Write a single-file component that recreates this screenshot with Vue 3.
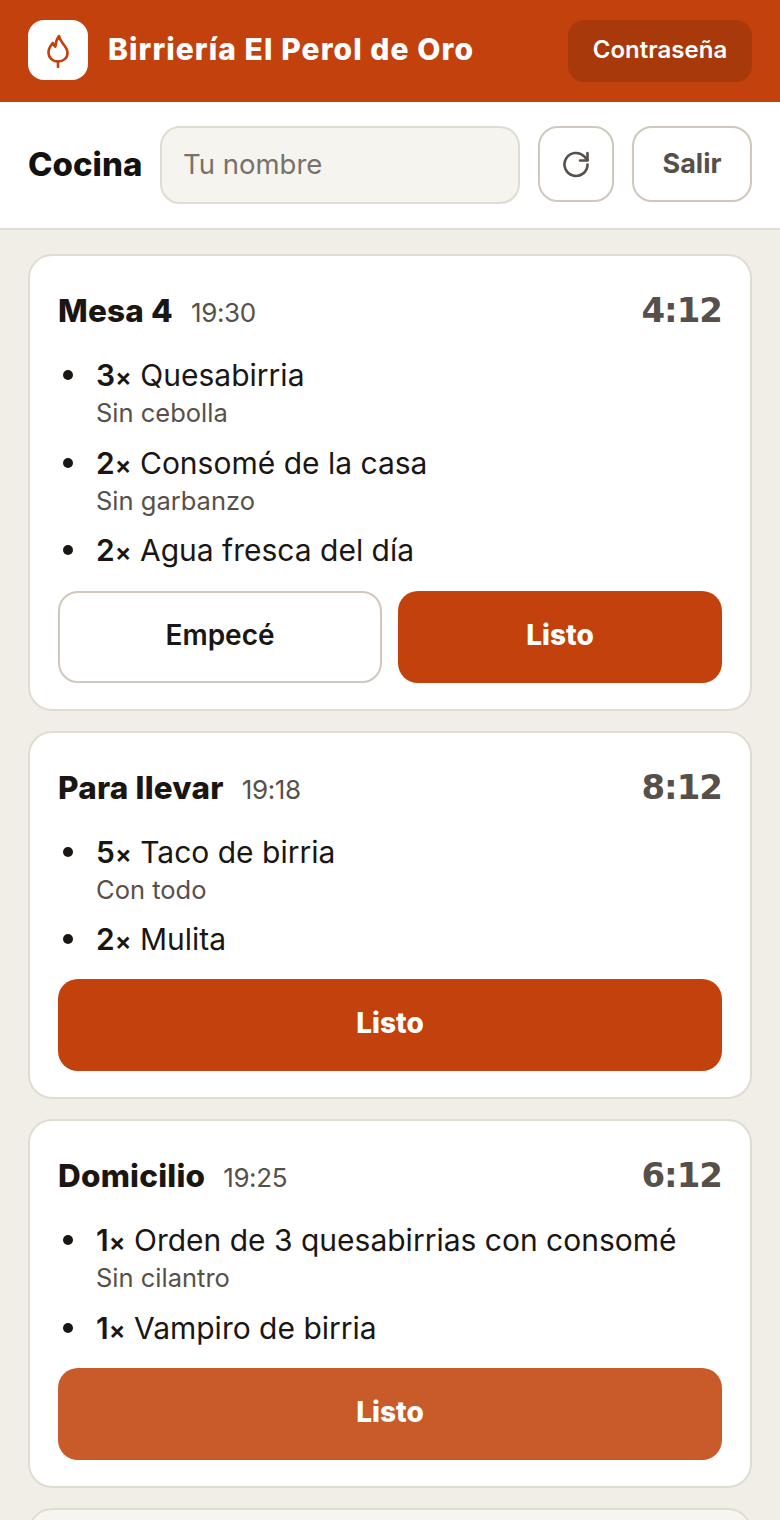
<script setup>
import { ref } from 'vue'

const nombre = ref('')

const orders = ref([
  {
    id: 1,
    mesa: 'Mesa 4',
    hora: '19:30',
    tiempo: '4:12',
    started: false,
    items: [
      { qty: 3, name: 'Quesabirria', note: 'Sin cebolla' },
      { qty: 2, name: 'Consomé de la casa', note: 'Sin garbanzo' },
      { qty: 2, name: 'Agua fresca del día' }
    ]
  },
  {
    id: 2,
    mesa: 'Para llevar',
    hora: '19:18',
    tiempo: '8:12',
    started: true,
    items: [
      { qty: 5, name: 'Taco de birria', note: 'Con todo' },
      { qty: 2, name: 'Mulita' }
    ]
  },
  {
    id: 3,
    mesa: 'Domicilio',
    hora: '19:25',
    tiempo: '6:12',
    started: true,
    busy: true,
    items: [
      { qty: 1, name: 'Orden de 3 quesabirrias con consomé', note: 'Sin cilantro' },
      { qty: 1, name: 'Vampiro de birria' }
    ]
  }
])
</script>

<template>
  <div class="page">
    <header class="topbar">
      <div class="logo">
        <svg width="34" height="36" viewBox="0 0 34 36" fill="none" stroke="#c2410c" stroke-width="2.6" stroke-linecap="round" stroke-linejoin="round">
          <path d="M17 29.500c-5.600 0-9.500-4-9.500-9.300 0-3.800 2-6.500 4.200-9.200 .6 1.800 1.300 3 2.600 3.700 .2-4 1.300-7.500 3.700-10.700 .8 4 2.800 6.200 4.800 8.700 2 2.400 3.700 4.900 3.700 8.200 0 5.200-4 8.600-9.500 8.600z" />
          <path d="M17 29.500v5.500" />
        </svg>
      </div>
      <h1 class="brand">Birriería El Perol de Oro</h1>
      <button class="pass-btn">Contraseña</button>
    </header>

    <div class="toolbar">
      <span class="section">Cocina</span>
      <input v-model="nombre" class="name-input" placeholder="Tu nombre" />
      <button class="ghost icon-btn" aria-label="Actualizar">
        <svg width="30" height="30" viewBox="0 0 30 30" fill="none" stroke="#57504a" stroke-width="2.6" stroke-linecap="round" stroke-linejoin="round">
          <path d="M26.500 15.500a11.500 11.500 0 1 1-3.300-8.100l3.300 3.600" />
          <path d="M26.500 4v7.500H19" />
        </svg>
      </button>
      <button class="ghost salir">Salir</button>
    </div>

    <main class="list">
      <article v-for="o in orders" :key="o.id" class="card">
        <div class="card-head">
          <div class="card-title">
            <span class="mesa">{{ o.mesa }}</span>
            <span class="hora">{{ o.hora }}</span>
          </div>
          <span class="tiempo">{{ o.tiempo }}</span>
        </div>
        <ul class="items">
          <li v-for="(it, i) in o.items" :key="i">
            <span><b>{{ it.qty }}</b><span class="times">×</span> {{ it.name }}</span>
            <div v-if="it.note" class="note">{{ it.note }}</div>
          </li>
        </ul>
        <div class="actions">
          <button v-if="!o.started" class="btn outline">Empecé</button>
          <button class="btn primary" :class="{ busy: o.busy }">Listo</button>
        </div>
      </article>
      <div class="card faded"></div>
    </main>
  </div>
</template>

<style>
html, body {
  margin: 0;
  background: #f1eee7;
}
</style>

<style scoped>
.page {
  height: 1520px;
  overflow: hidden;
  background: #f1eee7;
  font-family: Inter, "Liberation Sans", sans-serif;
  color: #1a1614;
}
button {
  font-family: inherit;
  cursor: pointer;
}
.topbar {
  height: 102px;
  box-sizing: border-box;
  display: flex;
  align-items: flex-start;
  gap: 20px;
  padding: 20px 28px 0;
  background: #c2410c;
}
.logo {
  width: 60px;
  height: 60px;
  flex: none;
  border-radius: 16px;
  background: #fff;
  display: flex;
  align-items: center;
  justify-content: center;
}
.brand {
  flex: 1;
  margin: 0;
  font-size: 30px;
  line-height: 58px;
  font-weight: 800;
  letter-spacing: 1.08px;
  color: #fff;
}
.pass-btn {
  width: 184px;
  height: 62px;
  border: none;
  border-radius: 16px;
  background: #a8390a;
  color: #fff;
  font-size: 24px;
  font-weight: 600;
  padding: 0 0 4px;
}
.toolbar {
  height: 128px;
  box-sizing: border-box;
  display: flex;
  align-items: flex-start;
  gap: 18px;
  padding: 24px 28px 0;
  background: #fff;
  border-bottom: 2px solid #e0dcd2;
}
.section {
  width: 114px;
  flex: none;
  font-size: 33px;
  font-weight: 800;
  line-height: 76px;
  color: #141210;
}
.name-input {
  width: 360px;
  height: 78px;
  box-sizing: border-box;
  padding: 0 21px 2px;
  border: 2px solid #e0dcd2;
  border-radius: 20px;
  background: #f6f4ef;
  font-family: inherit;
  font-size: 27.5px;
  color: #1a1614;
  outline: none;
}
.name-input::placeholder {
  color: #78716c;
}
.ghost {
  height: 76px;
  box-sizing: border-box;
  border: 2px solid #cfc8bb;
  border-radius: 20px;
  background: #fff;
  color: #57504a;
  display: flex;
  align-items: center;
  justify-content: center;
  padding: 0;
}
.icon-btn {
  width: 76px;
}
.salir {
  width: 120px;
  font-size: 27px;
  font-weight: 700;
  padding-bottom: 2px;
}
.list {
  display: flex;
  flex-direction: column;
  gap: 20px;
  padding: 24px 28px;
}
.card {
  background: #fff;
  border: 2px solid #e0dcd2;
  border-radius: 24px;
  padding: 28px 28px 26px;
}
.card.faded {
  height: 120px;
  flex: none;
  background: #f7f5f0;
}
.card-head {
  display: flex;
  justify-content: space-between;
  align-items: flex-start;
  height: 54px;
}
.card-title {
  display: flex;
  align-items: baseline;
  gap: 18px;
  line-height: 54px;
}
.mesa {
  font-size: 31.5px;
  font-weight: 800;
  letter-spacing: 0.2px;
  color: #1a1614;
}
.hora {
  font-size: 26px;
  letter-spacing: -0.4px;
  color: #57504a;
}
.tiempo {
  font-family: "DejaVu Sans", Inter, sans-serif;
  font-size: 34px;
  line-height: 52px;
  font-weight: 700;
  letter-spacing: -1px;
  color: #57504a;
}
.items {
  list-style: none;
  margin: 16px 0 0;
  padding: 0 0 0 38px;
  font-size: 30px;
  line-height: 42px;
}
.items li {
  position: relative;
  margin-bottom: 11.7px;
}
.items li::before {
  content: "";
  position: absolute;
  left: -33px;
  top: 16px;
  width: 10px;
  height: 10px;
  border-radius: 50%;
  background: #1a1614;
}
.items b {
  font-weight: 600;
}
.times {
  font-size: 25px;
  line-height: 1;
  font-weight: 600;
}
.note {
  font-size: 25.5px;
  line-height: 34px;
  color: #57504a;
}
.actions {
  display: grid;
  grid-auto-flow: column;
  grid-auto-columns: 1fr;
  gap: 16px;
  margin-top: 19.2px;
}
.btn {
  height: 92px;
  padding: 0 0 4px;
  border-radius: 20px;
  font-size: 28px;
}
.outline {
  border: 2px solid #cfc8bb;
  background: #fff;
  color: #1a1614;
  font-weight: 600;
}
.primary {
  border: none;
  background: #c2410c;
  color: #fff;
  font-weight: 800;
}
.primary.busy {
  background: #c95a2a;
}
</style>
